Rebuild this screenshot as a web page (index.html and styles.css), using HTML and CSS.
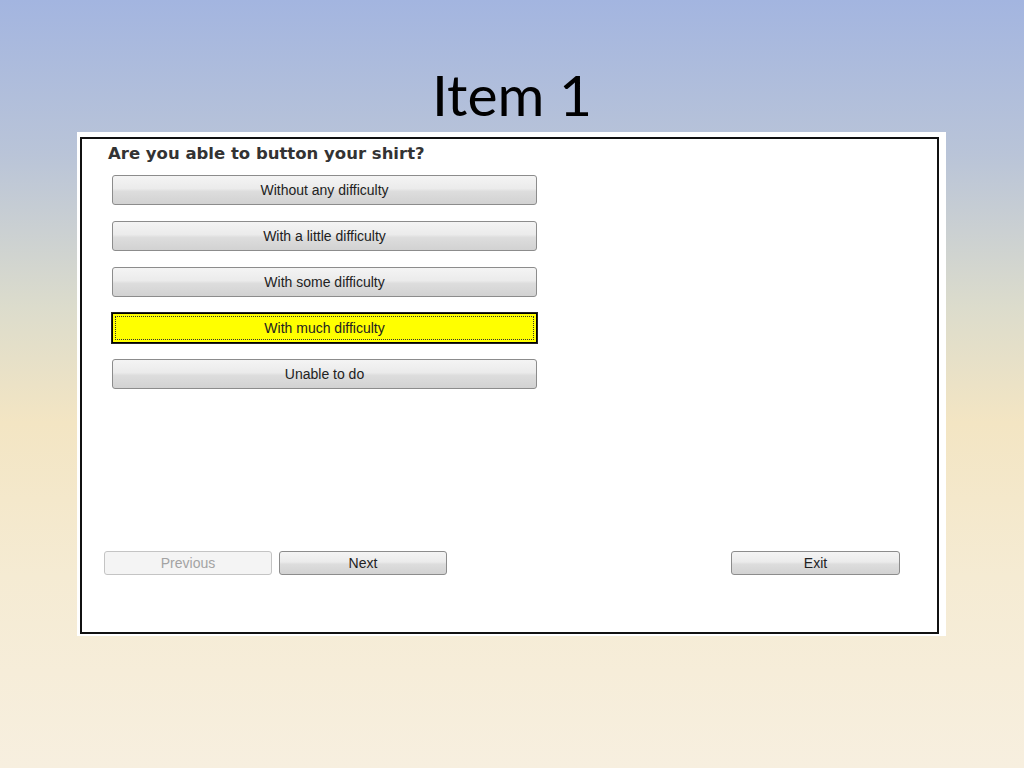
FILE: index.html
```html
<!DOCTYPE html>
<html>
<head>
<meta charset="utf-8">
<link rel="stylesheet" href="styles.css">
</head>
<body>
<div class="slide">
  <h1 class="title">Item 1</h1>
  <div class="panel">
    <div class="frame">
      <div class="question">Are you able to button your shirt?</div>
      <div class="options">
        <button class="opt">Without any difficulty</button>
        <button class="opt">With a little difficulty</button>
        <button class="opt">With some difficulty</button>
        <button class="opt selected">With much difficulty</button>
        <button class="opt">Unable to do</button>
      </div>
      <div class="nav">
        <button class="navbtn disabled">Previous</button>
        <button class="navbtn">Next</button>
        <button class="navbtn exit">Exit</button>
      </div>
    </div>
  </div>
</div>
</body>
</html>
```
FILE: styles.css
```css
html, body {
  margin: 0;
  padding: 0;
}
body {
  width: 1024px;
  height: 768px;
  overflow: hidden;
  background: linear-gradient(to bottom, #a3b5e0 0%, #b9c4d8 20%, #dcdccc 40%, #f3e5c3 55%, #f5ebd3 75%, #f7efdf 100%);
}
.slide {
  display: flex;
  flex-direction: column;
  align-items: flex-start;
}
.title {
  margin: 0;
  width: 1024px;
  height: 132px;
  box-sizing: border-box;
  padding-top: 61px;
  text-align: center;
  font-family: Lato, "Open Sans", sans-serif;
  font-weight: 400;
  font-size: 57px;
  line-height: 66px;
  color: #000;
}
.panel {
  margin-left: 77px;
  width: 869px;
  height: 504px;
  background: #fff;
  box-sizing: border-box;
  padding: 5px 7px 2px 3px;
}
.frame {
  height: 100%;
  box-sizing: border-box;
  border: 2px solid #111;
  display: flex;
  flex-direction: column;
}
.question {
  margin: 5px 0 0 26px;
  font-family: "DejaVu Sans", sans-serif;
  font-weight: bold;
  font-size: 16.5px;
  line-height: 20px;
  color: #333;
}
.options {
  margin: 11px 0 0 30px;
  display: flex;
  flex-direction: column;
  gap: 16px;
}
.opt, .navbtn {
  font-family: "Liberation Sans", Arial, sans-serif;
  font-size: 14px;
  color: #222;
  background: linear-gradient(to bottom, #f4f4f4 0%, #ebebeb 45%, #dddddd 55%, #d2d2d2 100%);
  border: 1px solid #8c8c8c;
  border-radius: 3px;
  padding: 0;
  margin: 0;
}
.opt {
  width: 425px;
  height: 30px;
}
.opt.selected {
  background: #ffff00;
  border: 1px solid #000;
  border-radius: 0;
  box-shadow: 0 0 0 1px #222;
  outline: 1px dotted #333;
  outline-offset: -4px;
}
.nav {
  margin-top: auto;
  margin-bottom: 57px;
  margin-left: 22px;
  margin-right: 37px;
  display: flex;
  gap: 7px;
}
.navbtn {
  width: 168px;
  height: 24px;
  font-size: 14px;
}
.navbtn.disabled {
  background: #f4f4f4;
  border-color: #c4c4c4;
  color: #a3a3a3;
}
.navbtn.exit {
  margin-left: auto;
  width: 169px;
}
```
